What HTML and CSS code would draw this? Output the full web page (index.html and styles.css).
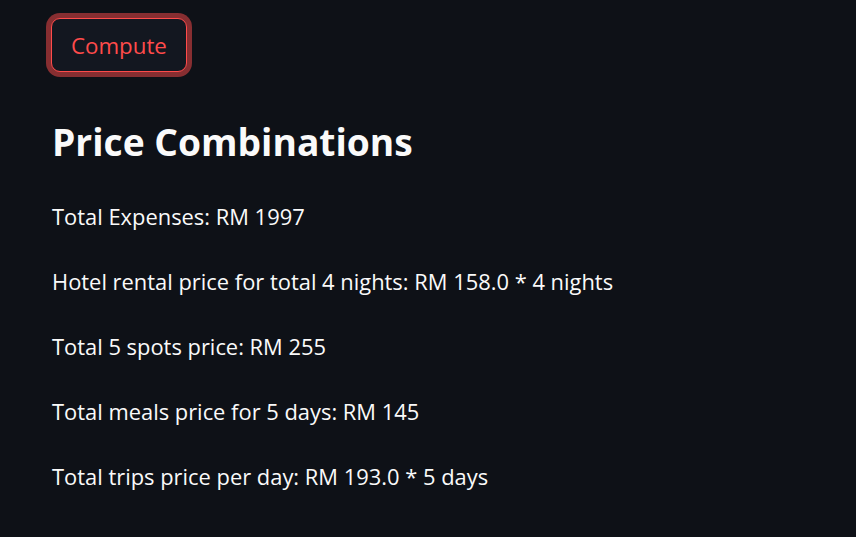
FILE: index.html
```html
<!DOCTYPE html>
<html lang="en">
<head>
<meta charset="utf-8">
<title>Price Combinations</title>
<link rel="stylesheet" href="styles.css">
</head>
<body>
<main class="app">
  <div class="actions">
    <button class="btn btn-focus" type="button">Compute</button>
  </div>
  <h2 class="title">Price Combinations</h2>
  <div class="results">
    <p class="line">Total Expenses: RM 1997</p>
    <p class="line">Hotel rental price for total 4 nights: RM 158.0 * 4 nights</p>
    <p class="line">Total 5 spots price: RM 255</p>
    <p class="line">Total meals price for 5 days: RM 145</p>
    <p class="line">Total trips price per day: RM 193.0 * 5 days</p>
  </div>
</main>
</body>
</html>
```
FILE: styles.css
```css
html, body {
  margin: 0;
  padding: 0;
  background: #0e1117;
  height: 100%;
  overflow: hidden;
}

body {
  color: #fafafa;
  font-family: "Open Sans", "Noto Sans", sans-serif;
}

.app {
  padding: 18px 0 0 51px;
}

.actions {
  display: flex;
}

.btn {
  display: inline-flex;
  align-items: center;
  justify-content: center;
  box-sizing: border-box;
  height: 54px;
  padding: 1px 19px 0;
  background: #131720;
  color: #ff4b4b;
  border: 1px solid #ff4b4b;
  border-radius: 9px;
  font-family: "Open Sans", "Noto Sans", sans-serif;
  font-size: 22.3px;
  font-weight: 400;
  line-height: normal;
  cursor: pointer;
}

.btn-focus {
  box-shadow: 0 0 0 5px rgba(255, 75, 75, 0.5);
}

.title {
  margin: 46px 0 0;
  padding-left: 1px;
  font-size: 37.2px;
  font-weight: 700;
  line-height: 48px;
  color: #fafafa;
}

.results {
  display: flex;
  flex-direction: column;
  gap: 33px;
  margin-top: 35px;
  padding-left: 1px;
}

.line {
  margin: 0;
  font-size: 21.9px;
  line-height: 32px;
  white-space: nowrap;
}
```
